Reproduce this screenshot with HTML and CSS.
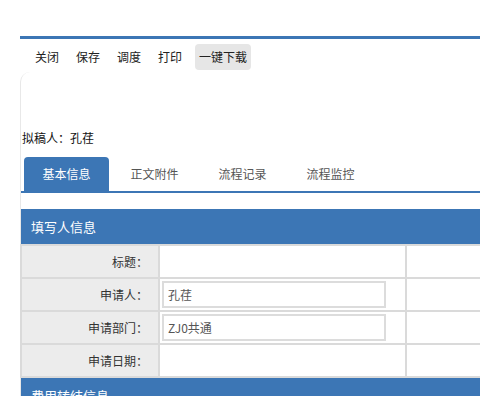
FILE: index.html
```html
<!DOCTYPE html>
<html lang="zh-CN">
<head>
    <meta charset="UTF-8">
    <meta name="viewport" content="width=device-width, initial-scale=1.0">
    <title>费用转结申请</title>
    <link rel="stylesheet" href="styles.css">
</head>
<body>
    <div class="page">
        <div class="topbar"></div>

        <div class="toolbar">
            <button class="tool-btn">关闭</button>
            <button class="tool-btn">保存</button>
            <button class="tool-btn">调度</button>
            <button class="tool-btn">打印</button>
            <button class="tool-btn active">一键下载</button>
        </div>

        <div class="panel">
            <div class="drafter">拟稿人：孔荏</div>

            <ul class="tabs">
                <li class="tab current">基本信息</li>
                <li class="tab">正文附件</li>
                <li class="tab">流程记录</li>
                <li class="tab">流程监控</li>
            </ul>

            <div class="section-title">填写人信息</div>
            <table class="form-table">
                <tr>
                    <td class="label">标题：</td>
                    <td class="value"></td>
                    <td class="extra"></td>
                </tr>
                <tr>
                    <td class="label">申请人：</td>
                    <td class="value"><input type="text" value="孔荏" readonly></td>
                    <td class="extra"></td>
                </tr>
                <tr>
                    <td class="label">申请部门：</td>
                    <td class="value"><input type="text" value="ZJ0共通" readonly></td>
                    <td class="extra"></td>
                </tr>
                <tr>
                    <td class="label">申请日期：</td>
                    <td class="value"></td>
                    <td class="extra"></td>
                </tr>
            </table>

            <div class="section-title">费用转结信息</div>
        </div>
    </div>
</body>
</html>
```

FILE: styles.css
```css
html, body {
    margin: 0;
    padding: 0;
    overflow: hidden;
    background: #fff;
}

body {
    font-family: "Noto Sans CJK SC", "Liberation Sans", sans-serif;
    font-size: 12px;
    color: #222;
}

.page {
    margin-left: 20px;
    width: 640px;
}

.topbar {
    margin-top: 36px;
    height: 3px;
    background: #3c76b5;
}

.toolbar {
    display: flex;
    gap: 9px;
    padding: 5px 0 2px 11px;
}

.tool-btn {
    height: 26px;
    padding: 0 4px;
    border: none;
    border-radius: 4px;
    background: transparent;
    font-family: inherit;
    font-size: 12px;
    line-height: 26px;
    color: #222;
    cursor: pointer;
}

.tool-btn.active {
    background: #e6e6e6;
}

.panel {
    border-left: 1px solid #e8e8e8;
    border-top-left-radius: 10px;
    padding-top: 58px;
}

.drafter {
    line-height: 16px;
    padding-left: 1px;
    color: #111;
}

.tabs {
    display: flex;
    list-style: none;
    margin: 11px 0 0;
    padding: 0 0 0 3px;
    border-bottom: 2px solid #3c76b5;
}

.tab {
    width: 85px;
    height: 34px;
    line-height: 34px;
    margin-right: 3px;
    text-align: center;
    color: #555;
    border-radius: 4px 4px 0 0;
}

.tab.current {
    background: #3c76b5;
    color: #fff;
}

.section-title {
    margin-top: 16px;
    height: 35px;
    line-height: 35px;
    padding-left: 10px;
    background: #3c76b5;
    color: #fff;
    font-size: 13px;
}

.form-table + .section-title {
    margin-top: 0;
}

.form-table {
    width: 100%;
    border-collapse: separate;
    border-spacing: 2px;
    background: #dadada;
    margin-left: -1px;
}

.form-table td {
    height: 31px;
    padding: 0;
}

.label {
    width: 126px;
    padding-right: 10px !important;
    background: #ececec;
    text-align: right;
    color: #333;
}

.value {
    width: 245px;
    background: #fff;
}

.extra {
    background: #fff;
}

.value input {
    display: block;
    box-sizing: border-box;
    width: 224px;
    height: 27px;
    margin-left: 2px;
    padding: 0 4px;
    border: 2px solid #dcdcdc;
    font-family: inherit;
    font-size: 12px;
    color: #555;
    outline: none;
}
```
